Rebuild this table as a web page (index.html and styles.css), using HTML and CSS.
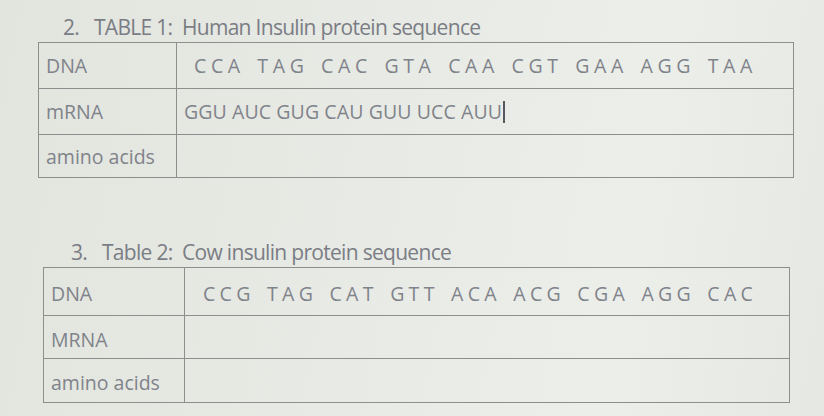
FILE: index.html
```html
<!DOCTYPE html>
<html>
<head>
<meta charset="utf-8">
<link rel="stylesheet" href="styles.css">
</head>
<body>
<div class="page">
  <section class="block block-one">
    <h2 class="title"><span class="num">2.</span><span>TABLE 1:&nbsp; Human Insulin protein sequence</span></h2>
    <table class="seq-table">
      <tr class="r1"><td class="label">DNA</td><td class="dna">CCA TAG CAC GTA CAA CGT GAA AGG TAA</td></tr>
      <tr class="r2"><td class="label">mRNA</td><td class="rna">GGU AUC GUG CAU GUU UCC AUU<span class="caret"></span></td></tr>
      <tr class="r3"><td class="label">amino acids</td><td></td></tr>
    </table>
  </section>
  <section class="block block-two">
    <h2 class="title"><span class="num">3.</span><span>Table 2:&nbsp; Cow insulin protein sequence</span></h2>
    <table class="seq-table">
      <tr class="r1"><td class="label">DNA</td><td class="dna">CCG TAG CAT GTT ACA ACG CGA AGG CAC</td></tr>
      <tr class="r2"><td class="label">MRNA</td><td></td></tr>
      <tr class="r3"><td class="label">amino acids</td><td></td></tr>
    </table>
  </section>
</div>
</body>
</html>
```
FILE: styles.css
```css
html, body {
  margin: 0;
  padding: 0;
}
body {
  width: 824px;
  height: 416px;
  overflow: hidden;
  background: linear-gradient(100deg, #e2e4de 0%, #e8eae5 45%, #eceeea 75%, #e6e8e3 100%);
  font-family: "Open Sans", "Liberation Sans", sans-serif;
  color: #7b7e84;
}
.page {
  display: flex;
  flex-direction: column;
}
.block-one {
  padding: 12px 0 0 38px;
}
.block-two {
  padding: 59px 0 0 43px;
}
.title {
  margin: 0;
  font-weight: 400;
  font-size: 21px;
  line-height: 30px;
  color: #7a7d84;
  display: flex;
  letter-spacing: -0.7px;
}
.block-one .title { padding-left: 25px; }
.block-two .title { padding-left: 28px; }
.num {
  width: 31px;
}
.seq-table {
  border-collapse: collapse;
  margin-top: 0;
}
.block-one .seq-table { width: 756px; }
.block-two .seq-table { width: 747px; }
.seq-table td {
  border: 1.5px solid #8d8f8e;
  padding: 0 0 0 7px;
  font-size: 19.5px;
  vertical-align: middle;
  color: #80838a;
  white-space: nowrap;
}
.block-two .seq-table td { padding-top: 4px; }
.block-one .label { width: 130px; }
.block-two .label { width: 133px; }
.block-one .r1 td, .block-one .r2 td { height: 45px; }
.block-one .r3 td { height: 42px; }
.block-two .r1 td { height: 43px; }
.block-two .r2 td { height: 38px; }
.block-two .r3 td { height: 39px; }
.dna {
  word-spacing: 3px;
  font-size: 18px;
  color: #878a90;
}
.block-one .dna { padding-left: 17px; letter-spacing: 4.6px; }
.block-two .dna { padding-left: 18px; letter-spacing: 4.3px; }
.rna {
  letter-spacing: 0.1px;
  font-size: 19.5px;
}
.caret {
  display: inline-block;
  width: 1.5px;
  height: 22px;
  background: #55585e;
  vertical-align: -4px;
  margin-left: 1px;
}
```
